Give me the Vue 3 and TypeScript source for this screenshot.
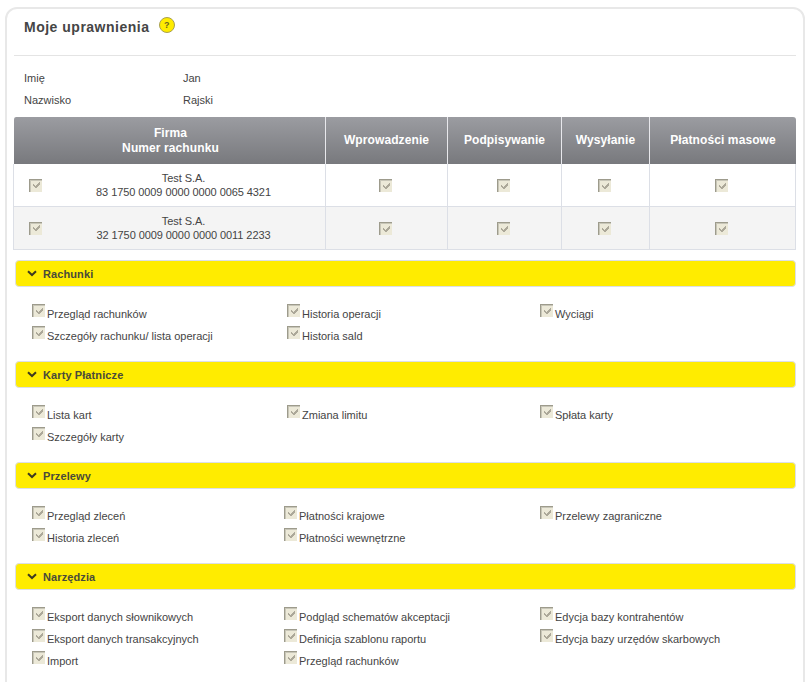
<template>
  <div class="page">
    <div class="card">
      <h1 class="title">
        Moje uprawnienia
        <span class="help">?</span>
      </h1>
      <div class="person">
        <template v-for="row in person" :key="row.label">
          <span>{{ row.label }}</span>
          <span>{{ row.value }}</span>
        </template>
      </div>
      <table class="accounts">
        <thead>
          <tr>
            <th>Firma<br />Numer rachunku</th>
            <th v-for="col in columns" :key="col">{{ col }}</th>
          </tr>
        </thead>
        <tbody>
          <tr v-for="acc in accounts" :key="acc">
            <td>
              <div class="account">
                <span class="cb">
                  <svg viewBox="0 0 9 9" width="9" height="9" shape-rendering="crispEdges"><path d="M7 1h1v3H7v1H6v1H5v1H3V6H2V5H1V3h1v1h1v1h1V4h1V3h1V2h1z" /></svg>
                </span>
                <span class="account-text">Test S.A.<br />{{ acc }}</span>
              </div>
            </td>
            <td v-for="col in columns" :key="col" class="mid">
              <span class="cb">
                <svg viewBox="0 0 9 9" width="9" height="9" shape-rendering="crispEdges"><path d="M7 1h1v3H7v1H6v1H5v1H3V6H2V5H1V3h1v1h1v1h1V4h1V3h1V2h1z" /></svg>
              </span>
            </td>
          </tr>
        </tbody>
      </table>
      <section v-for="sec in sections" :key="sec.title" class="section">
        <div class="bar">
          <svg class="chevron" viewBox="0 0 10 7" width="10" height="7"><path d="M1 1.2 5 5l4-3.8" fill="none" stroke="#3d3a20" stroke-width="2" /></svg>
          {{ sec.title }}
        </div>
        <div class="items" :class="sec.cls">
          <div v-for="item in sec.items" :key="item" class="item">
            <span class="cb">
              <svg viewBox="0 0 9 9" width="9" height="9" shape-rendering="crispEdges"><path d="M7 1h1v3H7v1H6v1H5v1H3V6H2V5H1V3h1v1h1v1h1V4h1V3h1V2h1z" /></svg>
            </span>
            <span class="item-label">{{ item }}</span>
          </div>
        </div>
      </section>
    </div>
  </div>
</template>

<script setup lang="ts">
const person = [
  { label: 'Imię', value: 'Jan' },
  { label: 'Nazwisko', value: 'Rajski' },
];

const columns = ['Wprowadzenie', 'Podpisywanie', 'Wysyłanie', 'Płatności masowe'];

const accounts = ['83 1750 0009 0000 0000 0065 4321', '32 1750 0009 0000 0000 0011 2233'];

const sections = [
  {
    title: 'Rachunki',
    cls: 'cols-a',
    items: [
      'Przegląd rachunków',
      'Historia operacji',
      'Wyciągi',
      'Szczegóły rachunku/ lista operacji',
      'Historia sald',
    ],
  },
  {
    title: 'Karty Płatnicze',
    cls: 'cols-a',
    items: ['Lista kart', 'Zmiana limitu', 'Spłata karty', 'Szczegóły karty'],
  },
  {
    title: 'Przelewy',
    cls: 'cols-b',
    items: [
      'Przegląd zleceń',
      'Płatności krajowe',
      'Przelewy zagraniczne',
      'Historia zleceń',
      'Płatności wewnętrzne',
    ],
  },
  {
    title: 'Narzędzia',
    cls: 'cols-b',
    items: [
      'Eksport danych słownikowych',
      'Podgląd schematów akceptacji',
      'Edycja bazy kontrahentów',
      'Eksport danych transakcyjnych',
      'Definicja szablonu raportu',
      'Edycja bazy urzędów skarbowych',
      'Import',
      'Przegląd rachunków',
    ],
  },
];
</script>

<style>
html,
body {
  margin: 0;
  background: #fff;
  overflow: hidden;
}
</style>

<style scoped>
.page {
  height: 682px;
  overflow: hidden;
  padding: 7px 3px 0 5px;
  box-sizing: border-box;
  font-family: "Liberation Sans", Arial, sans-serif;
  font-size: 11px;
  color: #444;
}

.card {
  border: 2px solid #e8e8e8;
  border-radius: 12px;
  padding: 0 7px 20px 7px;
  height: 720px;
  box-sizing: border-box;
}

.title {
  margin: 0;
  height: 47px;
  padding: 8px 0 0 10px;
  box-sizing: border-box;
  border-bottom: 1px solid #e4e4e4;
  font-size: 14px;
  line-height: 18px;
  font-weight: bold;
  letter-spacing: 0.5px;
  color: #454545;
}

.help {
  display: inline-block;
  width: 14px;
  height: 14px;
  margin-left: 5px;
  border: 1px solid #a8a050;
  border-radius: 50%;
  background: #ffec00;
  font-size: 9px;
  line-height: 14px;
  letter-spacing: 0;
  text-align: center;
  vertical-align: 4px;
  color: #6b6420;
}

.person {
  display: grid;
  grid-template-columns: 159px 1fr;
  grid-auto-rows: 22px;
  padding: 11px 0 6px 10px;
  line-height: 22px;
}

.accounts {
  width: 783px;
  margin-left: -1px;
  table-layout: fixed;
  border-collapse: separate;
  border-spacing: 0;
}

.accounts th {
  box-sizing: border-box;
  height: 47px;
  padding: 0;
  border-left: 1px solid #e8e8ec;
  background: linear-gradient(#9b9ca1, #78797d);
  color: #fff;
  font-size: 12px;
  line-height: 15px;
  font-weight: bold;
  letter-spacing: 0.1px;
  text-align: center;
}

.accounts th:nth-child(1) {
  width: 312px;
  padding-left: 2px;
  border-left: 1px solid #fff;
  border-top-left-radius: 3px;
}

.accounts th:nth-child(2) {
  width: 122px;
}

.accounts th:nth-child(3) {
  width: 114px;
}

.accounts th:nth-child(4) {
  width: 88px;
}

.accounts th:nth-child(5) {
  width: 147px;
  border-top-right-radius: 3px;
}

.accounts td {
  box-sizing: border-box;
  height: 43px;
  padding: 0;
  border-left: 1px solid #dcdfe6;
  border-bottom: 1px solid #dcdfe6;
  line-height: 14px;
}

.accounts td:last-child {
  border-right: 1px solid #dcdfe6;
}

.accounts tbody tr:nth-child(even) td {
  background: #f4f4f4;
}

.accounts td.mid {
  padding-right: 2px;
  text-align: center;
}

.mid .cb {
  vertical-align: middle;
}

.account {
  display: flex;
  align-items: center;
  padding-left: 15px;
}

.account-text {
  flex: 1;
  letter-spacing: -0.08px;
  text-align: center;
}

.cb {
  display: inline-flex;
  align-items: center;
  justify-content: center;
  flex: none;
  width: 12px;
  height: 12px;
  border-top: 1px solid #9d9b8c;
  border-left: 1px solid #9d9b8c;
  box-shadow: inset 1px 1px 0 #c8c6b8;
  background: #ece9d8;
}

.cb svg {
  fill: #aca899;
}

.section {
  margin-top: 10px;
}

.bar {
  display: flex;
  align-items: center;
  gap: 6px;
  height: 25px;
  margin-left: 1px;
  padding-left: 11px;
  border: 1px solid #dcdfe6;
  border-radius: 4px;
  background: #ffec00;
  font-weight: bold;
  letter-spacing: 0.1px;
  color: #4a4a3a;
}

.items {
  display: grid;
  grid-auto-rows: 22px;
  padding: 15px 0 5px 18px;
}

.cols-a {
  grid-template-columns: 255px 253px 1fr;
}

.cols-b {
  grid-template-columns: 252px 256px 1fr;
}

.item {
  display: flex;
  align-items: flex-start;
  gap: 2px;
  line-height: 22px;
}

.item .cb {
  margin-top: 2px;
}

.item-label {
  white-space: nowrap;
  padding-top: 1px;
}
</style>
